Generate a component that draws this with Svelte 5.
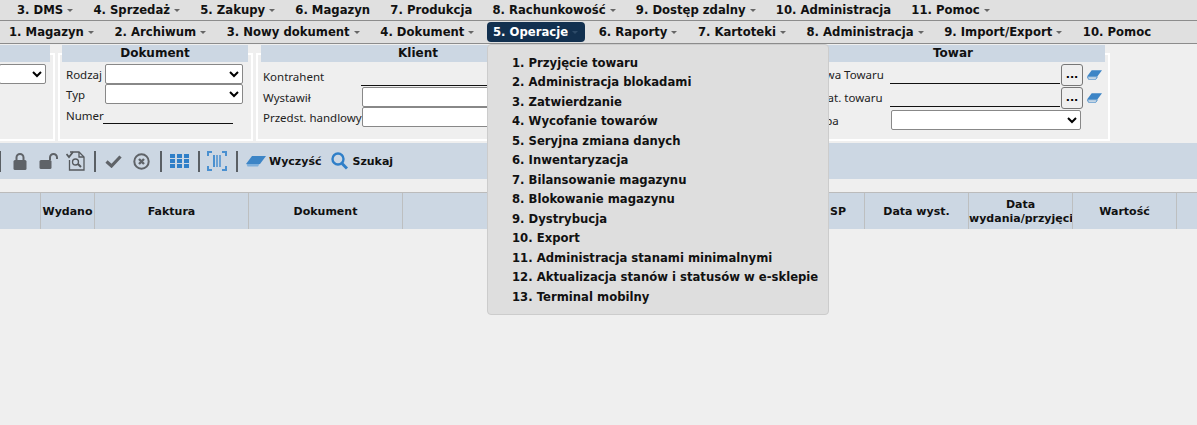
<script>
  // menu bars
  const topMenu = [
    { label: '3. DMS', caret: true },
    { label: '4. Sprzedaż', caret: true },
    { label: '5. Zakupy', caret: true },
    { label: '6. Magazyn', caret: false },
    { label: '7. Produkcja', caret: false },
    { label: '8. Rachunkowość', caret: true },
    { label: '9. Dostęp zdalny', caret: true },
    { label: '10. Administracja', caret: false },
    { label: '11. Pomoc', caret: true }
  ];

  const subMenu = [
    { label: '1. Magazyn', caret: true },
    { label: '2. Archiwum', caret: true },
    { label: '3. Nowy dokument', caret: true },
    { label: '4. Dokument', caret: true },
    { label: '5. Operacje', caret: true, active: true },
    { label: '6. Raporty', caret: true },
    { label: '7. Kartoteki', caret: true },
    { label: '8. Administracja', caret: true },
    { label: '9. Import/Export', caret: true },
    { label: '10. Pomoc', caret: false }
  ];

  const operations = [
    '1. Przyjęcie towaru',
    '2. Administracja blokadami',
    '3. Zatwierdzanie',
    '4. Wycofanie towarów',
    '5. Seryjna zmiana danych',
    '6. Inwentaryzacja',
    '7. Bilansowanie magazynu',
    '8. Blokowanie magazynu',
    '9. Dystrybucja',
    '10. Export',
    '11. Administracja stanami minimalnymi',
    '12. Aktualizacja stanów i statusów w e-sklepie',
    '13. Terminal mobilny'
  ];

  const columns = [
    { label: '', width: 41 },
    { label: 'Wydano', width: 54 },
    { label: 'Faktura', width: 154 },
    { label: 'Dokument', width: 154 },
    { label: '', width: 412 },
    { label: 'SP', width: 50, align: 'left' },
    { label: 'Data wyst.', width: 104 },
    { label: 'Data wydania/przyjęcia', width: 104 },
    { label: 'Wartość', width: 104 },
    { label: '', width: 20 }
  ];
</script>

<div class="page">
  <nav class="menu top">
    {#each topMenu as item}
      <span class="item">{item.label}{#if item.caret}<i class="caret"></i>{/if}</span>
    {/each}
  </nav>

  <nav class="menu sub">
    {#each subMenu as item}
      <span class="item" class:active={item.active}>{item.label}{#if item.caret}<i class="caret"></i>{/if}</span>
    {/each}
  </nav>

  <section class="filters">
    <div class="panel first">
      <h4>&nbsp;</h4>
      <div class="body">
        <select class="sel" aria-label="Magazyn"></select>
      </div>
    </div>

    <div class="panel doc">
      <h4>Dokument</h4>
      <div class="body">
        <div class="row"><label for="rodzaj">Rodzaj</label><select id="rodzaj" class="sel"></select></div>
        <div class="row"><label for="typ">Typ</label><select id="typ" class="sel"></select></div>
        <div class="row num"><span class="lbl">Numer</span><span class="line"></span></div>
      </div>
    </div>

    <div class="panel client">
      <h4>Klient</h4>
      <div class="body">
        <div class="row contr"><span class="lbl">Kontrahent</span><span class="line"></span></div>
        <div class="row"><label for="wyst">Wystawił</label><input id="wyst" class="inp" /></div>
        <div class="row"><label for="przed">Przedst. handlowy</label><input id="przed" class="inp" /></div>
      </div>
    </div>

    <div class="panel hidden-panel">
      <h4>&nbsp;</h4>
    </div>

    <div class="panel goods">
      <h4>Towar</h4>
      <div class="body">
        <div class="row">
          <span class="lbl">Nazwa Towaru</span><span class="line"></span>
          <button class="dots">...</button>
          <svg class="eraser-sm" viewBox="0 0 16 10"><path d="M5 0h11l-5 6.500H0z" fill="#3d85c6" /><path d="M0.500 7h10.500l-1.500 2.500H1.500z" fill="none" stroke="#3d85c6" stroke-width="0.900" /></svg>
        </div>
        <div class="row">
          <span class="lbl">Nr kat. towaru</span><span class="line"></span>
          <button class="dots">...</button>
          <svg class="eraser-sm" viewBox="0 0 16 10"><path d="M5 0h11l-5 6.500H0z" fill="#3d85c6" /><path d="M0.500 7h10.500l-1.500 2.500H1.500z" fill="none" stroke="#3d85c6" stroke-width="0.900" /></svg>
        </div>
        <div class="row"><label for="grupa">Grupa</label><select id="grupa" class="sel"></select></div>
      </div>
    </div>
  </section>

  <div class="toolbar">
    <span class="sep edge"></span>
    <svg class="lock" width="14" height="17" viewBox="0 0 14 17"><path d="M3.500 7V4.500a3.500 3.500 0 0 1 7 0V7" fill="none" stroke="#5f6368" stroke-width="2" /><rect x="0.500" y="7" width="13" height="10" rx="1.500" fill="#5f6368" /></svg>
    <svg class="unlock" width="19" height="16" viewBox="0 0 19 16"><path d="M11 7V4.500a3.500 3.500 0 0 1 7 0V6" fill="none" stroke="#5f6368" stroke-width="2" /><rect x="0.500" y="7" width="12" height="9" rx="1.500" fill="#5f6368" /></svg>
    <svg class="docs" width="19" height="20" viewBox="0 0 19 20" fill="none" stroke="#55595d" stroke-width="1.300"><path d="M4 1h9l5 5v13H3.500V9" /><path d="M13 1v5h5" /><path d="M0.500 3l2.500 3 4-5" stroke-width="1.800" /><circle cx="9.500" cy="11" r="3" /><path d="M12 13l3 3" stroke-width="2" /></svg>
    <span class="sep s1"></span>
    <svg class="check" width="17" height="13" viewBox="0 0 17 13"><path d="M1.500 6.500l5 4.500 9-9.500" fill="none" stroke="#5f6368" stroke-width="3.200" /></svg>
    <svg class="cancel" width="17" height="17" viewBox="0 0 17 17" fill="none" stroke="#5f6368"><circle cx="8.500" cy="8.500" r="7.200" stroke-width="2" /><path d="M6 6l5 5M11 6l-5 5" stroke-width="2.400" /></svg>
    <span class="sep s2"></span>
    <svg class="grid" width="19" height="14" viewBox="0 0 19 14" fill="#2f7fc8">
      {#each [0, 5, 10] as y}
        {#each [0, 7, 14] as x}
          <rect {x} {y} width="5" height="4" />
        {/each}
      {/each}
    </svg>
    <span class="sep s3"></span>
    <svg class="barcode" width="20" height="20" viewBox="0 0 20 20" fill="none" stroke="#4a90d0" stroke-width="2"><path d="M1 5V1h4M15 1h4v4M1 15v4h4M15 19h4v-4" /><path d="M7 4v12" /><path d="M10 4v12M13 4v12" stroke-width="1.500" /></svg>
    <span class="sep s4"></span>
    <span class="action wipe">
      <svg width="20" height="11" viewBox="0 0 20 11"><path d="M6 0h14l-6 8H0z" fill="#3d85c6" /><path d="M0.500 8h13l-1.500 2.500H1.500z" fill="#7fb0dc" /></svg>
      Wyczyść
    </span>
    <span class="action search">
      <svg width="17" height="18" viewBox="0 0 17 18" fill="none" stroke="#2f7fc8"><circle cx="7" cy="7" r="5.500" stroke-width="2.400" /><path d="M11 11.500l5 5" stroke-width="3" /></svg>
      Szukaj
    </span>
  </div>

  <div class="thead">
    {#each columns as col}
      <div class="th" class:left={col.align === 'left'} style="width: {col.width}px">
        <span>{col.label}</span>
      </div>
    {/each}
  </div>

  <ul class="dropdown">
    {#each operations as op}
      <li>{op}</li>
    {/each}
  </ul>
</div>

<style>
  :global(body) {
    margin: 0;
    background: #efefef;
    font-family: "DejaVu Sans", Tahoma, sans-serif;
    font-size: 11.650px;
    color: #111;
  }

  .page {
    position: relative;
    width: 1197px;
    height: 425px;
    overflow: hidden;
  }

  .menu {
    display: flex;
    align-items: center;
    background: #e0e0e0;
    border-bottom: 1px solid #8c8c8c;
    font-weight: bold;
    white-space: nowrap;
  }

  .menu.top {
    height: 20px;
    padding-left: 17px;
    gap: 20.200px;
  }

  .menu.sub {
    height: 22px;
    padding-left: 9px;
    gap: 20.600px;
  }

  .item {
    display: inline-flex;
    align-items: center;
  }

  .item.active {
    background: #12304f;
    color: #fff;
    border-radius: 4px;
    margin: 0 -7px 0 -8px;
    padding: 3px 7px 3px 6px;
  }

  .item.active .caret {
    border-top-color: #2d4a68;
  }

  .caret {
    display: inline-block;
    margin-left: 4px;
    border-left: 3px solid transparent;
    border-right: 3px solid transparent;
    border-top: 3px solid #666;
  }

  .filters {
    display: flex;
    align-items: flex-start;
    height: 97px;
    margin-left: -6px;
    gap: 3px;
  }

  .panel {
    flex: none;
    height: 88px;
    margin-top: 9px;
    border: 2px solid #fff;
    padding: 0 3px;
    box-sizing: border-box;
  }

  .panel h4 {
    margin: -10px 0 0;
    height: 17px;
    line-height: 17px;
    background: #ccd7e3;
    text-align: center;
    font-size: 12px;
  }

  .body {
    padding-top: 2px;
  }

  .row {
    display: flex;
    align-items: center;
    height: 20px;
  }

  .first { width: 61px; }
  .doc { width: 195px; padding-left: 2px; }
  .client { width: 324px; }
  .hidden-panel { width: 210px; }
  .goods { width: 314px; }

  .first .sel { display: block; width: 47px; }

  .row label, .lbl {
    color: #222;
    font-family: "Noto Sans", sans-serif;
    font-size: 11.500px;
    white-space: nowrap;
  }

  .doc .body { padding-left: 4px; }
  .doc .row label, .doc .lbl { width: 39px; }
  .doc .sel { width: 138px; }
  .doc .num { height: 22px; }
  .doc .num .line { width: 130px; margin-left: -2px; }

  .client .body { padding-left: 2px; }
  .client .row label, .client .lbl { width: 99px; }
  .client .contr { height: 23px; padding-top: 1px; box-sizing: border-box; }
  .client .contr .lbl { width: 98px; }

  .inp {
    flex: 1;
    min-width: 0;
    height: 20px;
    box-sizing: border-box;
    border: 1px solid #888;
    border-radius: 2px;
    background: #fff;
    padding: 0;
  }

  .goods .body { padding: 1px 0 0 4px; }
  .goods .row { height: 23px; }
  .goods .row:last-child { height: 20px; margin-top: 1px; }
  .goods .row label, .goods .lbl { width: 85px; }
  .goods .line { height: 20px; }

  .sel {
    height: 20px;
    box-sizing: border-box;
    background: #fff;
    border: 1px solid #888;
    border-radius: 2px;
    padding: 0;
  }

  .goods .sel { width: 190px; margin-left: 1px; }

  .line {
    display: inline-block;
    width: 170px;
    height: 19px;
    border-bottom: 1px solid #111;
    align-self: flex-start;
  }

  .client .line { flex: 1; height: 20px; }

  .dots {
    width: 22px;
    height: 22px;
    margin-left: 1px;
    padding: 0;
    background: #efefef;
    border: 1px solid #777;
    border-radius: 3px;
    font-weight: bold;
    font-size: 11px;
    font-family: inherit;
  }

  .eraser-sm {
    width: 15px;
    height: 10px;
    margin-left: 4px;
  }

  .toolbar {
    display: flex;
    align-items: center;
    height: 36px;
    margin-top: 2px;
    background: #ccd7e3;
    font-size: 11px;
    font-weight: bold;
  }

  .toolbar svg { flex: none; }

  .sep {
    flex: none;
    width: 2px;
    height: 21px;
    background: #5a5f64;
    margin-left: 9px;
  }

  .sep.edge { margin-left: -1px; }
  .s2 { margin-left: 10px; }

  .lock { margin-left: 12px; }
  .unlock { margin-left: 12px; }
  .docs { margin-left: 8px; }
  .check { margin-left: 9px; }
  .cancel { margin-left: 11px; }
  .grid { margin-left: 8px; }
  .barcode { margin-left: 7px; }

  .action {
    display: inline-flex;
    align-items: center;
    gap: 3px;
    white-space: nowrap;
  }

  .action.wipe { margin-left: 8px; }
  .action.search { margin-left: 10px; gap: 4px; }

  .thead {
    display: flex;
    height: 37px;
    margin-top: 13px;
    background: #ccd7e3;
    border-top: 1px solid #bbb;
    box-sizing: border-box;
    font-size: 11px;
    font-weight: bold;
  }

  .th {
    flex: none;
    box-sizing: border-box;
    display: flex;
    align-items: center;
    padding-top: 1px;
    border-right: 1px solid #bdbfc0;
    overflow: hidden;
    line-height: 14px;
  }

  .th span {
    display: block;
    width: 100%;
    text-align: center;
  }

  .th.left span { text-align: left; padding-left: 15px; }
  .th:last-child { border-right: 0; }

  .dropdown {
    position: absolute;
    left: 487px;
    top: 44px;
    width: 342px;
    height: 271px;
    box-sizing: border-box;
    margin: 0;
    padding: 8.500px 0 0 24px;
    list-style: none;
    background: #dedede;
    border: 1px solid #ccc;
    border-radius: 4px;
    font-weight: bold;
    white-space: nowrap;
  }

  .dropdown li {
    height: 19.500px;
    line-height: 19.500px;
  }
</style>
